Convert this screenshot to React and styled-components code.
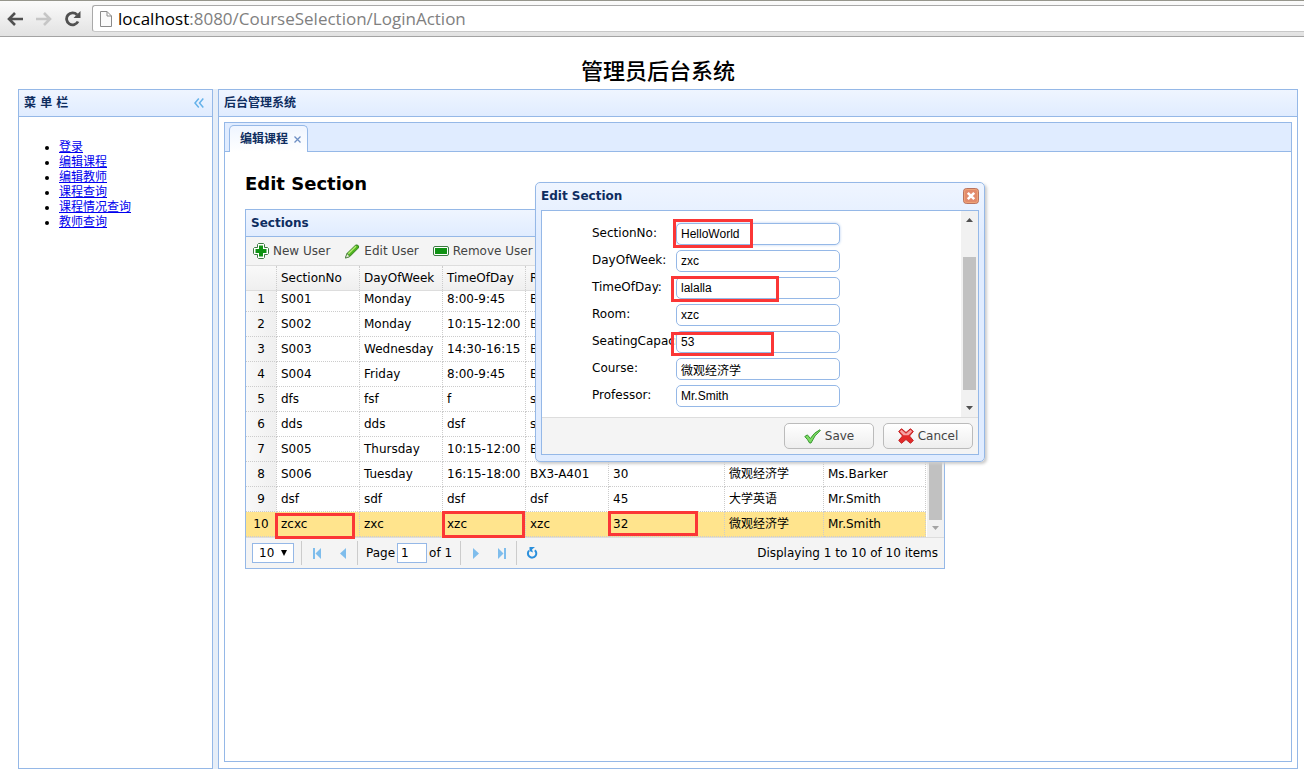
import React from 'react';
import styled, { createGlobalStyle, css } from 'styled-components';

const line = '#95B8E7';
const ui = '"DejaVu Sans", Verdana, "Noto Sans CJK SC", sans-serif';

const Global = createGlobalStyle`
  *, *::before, *::after { box-sizing: border-box; }
  body { margin: 0; background: #fff; color: #000; font: 12px/16px ${ui}; }
  button, input, select { font: inherit; color: inherit; margin: 0; }
`;

const headerFill = css`background: linear-gradient(to bottom, #EFF5FF 0, #E0ECFF 100%);`;

const Page = styled.div`
  min-height: 100vh;
  display: flex;
  flex-direction: column;
`;

/* ---------- browser bar ---------- */
const BrowserBar = styled.header`
  height: 37px;
  padding: 4px 0 4px 5px;
  display: flex;
  align-items: center;
  gap: 9px;
  background: linear-gradient(to bottom, #fbfbfb, #e2e2e2);
  border-top: 1px solid #96968c;
  border-bottom: 1px solid #a3a3a3;
`;
const NavButton = styled.button`
  width: 20px;
  height: 20px;
  padding: 0;
  border: 0;
  background: none;
  display: flex;
  align-items: center;
  justify-content: center;
  svg { display: block; }
`;
const Address = styled.div`
  flex: 1;
  height: 27px;
  display: flex;
  align-items: center;
  gap: 6px;
  padding-left: 7px;
  background: #fff;
  border: 1px solid #a9a9a9;
  border-bottom-color: #c8c8c8;
  border-right: 0;
  border-radius: 3px 0 0 3px;
  font: 17px/22px "Open Sans", "Noto Sans", sans-serif;
  color: #808080;
  white-space: nowrap;
  b { font-weight: 400; color: #000; }
`;

/* ---------- page frame ---------- */
const PageTitle = styled.h1`
  margin: 19px 0 1px 12px;
  text-align: center;
  font: 500 22px/32px "Liberation Serif", "Noto Sans CJK SC", serif;
`;
const Layout = styled.main`
  flex: 1;
  display: flex;
  gap: 5px;
  margin: 0 6px 7px 18px;
  background: #E6EEF8;
`;
const Panel = styled.section`
  display: flex;
  flex-direction: column;
  border: 1px solid ${line};
  background: #fff;
  min-width: 0;
  ${p => p.$side ? 'flex: 0 0 195px;' : 'flex: 1;'}
`;
const PanelHeader = styled.h2`
  margin: 0;
  height: 27px;
  padding: 0 8px 0 5px;
  display: flex;
  align-items: center;
  justify-content: space-between;
  border-bottom: 1px solid ${line};
  ${headerFill}
  font: 700 12px/16px ${ui};
  color: #0E2D5F;
`;
const IconButton = styled.button`
  padding: 0;
  border: 0;
  background: none;
  display: flex;
  svg { display: block; }
`;
const MenuList = styled.ul`
  margin: 23px 0 0;
  padding-left: 40px;
  line-height: 15px;
  a { color: #0000ee; }
`;

/* ---------- tabs ---------- */
const Tabs = styled.div`
  flex: 1;
  margin: 5px 5px 6px;
  border: 1px solid ${line};
  display: flex;
  flex-direction: column;
`;
const TabStrip = styled.div`
  height: 29px;
  padding: 2px 4px 0;
  display: flex;
  background: #E0ECFF;
  border-bottom: 1px solid ${line};
`;
const Tab = styled.div`
  height: 27px;
  padding: 0 6px 0 10px;
  display: flex;
  align-items: center;
  gap: 6px;
  border: 1px solid ${line};
  border-bottom: 0;
  border-radius: 5px 5px 0 0;
  background: linear-gradient(to bottom, #EFF5FF, #fff);
  font-weight: 700;
  color: #0E2D5F;
`;
const TabBody = styled.div`
  position: relative;
  flex: 1;
  padding: 20px;
`;
const Heading = styled.h2`
  margin: 0 0 14px;
  font: 700 18px/23px ${ui};
`;

/* ---------- data grid ---------- */
const Grid = styled.section`
  position: relative;
  width: 700px;
  border: 1px solid ${line};
`;
const Toolbar = styled.div`
  height: 29px;
  padding: 0 7px;
  display: flex;
  align-items: center;
  gap: 14px;
  background: #F4F4F4;
  border-bottom: 1px solid #ddd;
`;
const ToolButton = styled.button`
  padding: 0;
  border: 0;
  background: none;
  display: flex;
  align-items: center;
  gap: 4px;
  color: #444;
  white-space: nowrap;
`;
const Table = styled.table`
  width: 680px;
  flex: none;
  table-layout: fixed;
  border-collapse: separate;
  border-spacing: 0;
  th, td {
    height: 25px;
    padding: 0 4px;
    text-align: left;
    font-weight: 400;
    white-space: nowrap;
    overflow: hidden;
    border-right: 1px dotted #ccc;
    border-bottom: 1px dotted #ccc;
  }
  thead th { height: 24px; border-bottom: 0; }
  tbody th { text-align: center; padding: 0; background: linear-gradient(to right, #F9F9F9, #EFEFEF); }
`;
const Row = styled.tr`
  ${p => p.$selected && css`
    && td, && th { background: #FFE48D; }
  `}
`;
const GridHead = styled.div`
  background: linear-gradient(to bottom, #F9F9F9, #EFEFEF);
  border-bottom: 1px solid #ddd;
`;
const GridBody = styled.div`
  height: 246px;
  display: flex;
  align-items: flex-end;
  justify-content: space-between;
  overflow: hidden;
`;
const ScrollBar = styled.div`
  width: 17px;
  align-self: stretch;
  flex: none;
  display: flex;
  flex-direction: column;
  align-items: center;
  padding: 7px 0;
  background: #f1f1f1;
  svg { display: block; flex: none; }
`;
const Thumb = styled.div`
  width: 13px;
  height: ${p => p.$h}px;
  margin: auto 0 ${p => p.$end}px;
  background: #c1c1c1;
`;
const Pager = styled.div`
  height: 31px;
  padding: 0 6px;
  display: flex;
  align-items: center;
  background: #F4F4F4;
  border-top: 1px solid #ddd;
`;
const PageSize = styled.select`
  width: 42px;
  height: 20px;
  margin-right: 6px;
  padding: 0 0 0 6px;
  border: 1px solid ${line};
  border-radius: 0;
  appearance: none;
  background: #fff url("data:image/svg+xml,%3Csvg xmlns='http://www.w3.org/2000/svg' width='6' height='6'%3E%3Cpath d='M0 0h6L3 6z'/%3E%3C/svg%3E") no-repeat 28px 6px;
`;
const Divider = styled.span`
  width: 1px;
  height: 24px;
  margin: 0 2px 0 1px;
  background: #ccc;
`;
const PagerButton = styled.button`
  width: 26px;
  height: 24px;
  padding: 0;
  border: 0;
  background: none;
  display: flex;
  align-items: center;
  justify-content: center;
`;
const PageField = styled.label`
  margin: 0 7px 0 6px;
  display: flex;
  align-items: center;
  gap: 2px;
  input {
    width: 30px;
    height: 20px;
    padding: 0 3px;
    border: 1px solid ${line};
  }
`;
const Summary = styled.span`margin-left: auto;`;

/* ---------- dialog ---------- */
const Dialog = styled.div`
  position: absolute;
  left: 310px;
  top: 30px;
  width: 450px;
  padding: 0 5px 6px;
  border: 1px solid ${line};
  border-radius: 5px;
  background: linear-gradient(to bottom, #EFF5FF 0, #E0ECFF 20%);
  box-shadow: 2px 2px 3px #ccc;
`;
const DialogHeader = styled.h2`
  margin: 0;
  height: 27px;
  padding-bottom: 2px;
  display: flex;
  align-items: center;
  justify-content: space-between;
  font: 700 12px/16px ${ui};
  color: #0E2D5F;
`;
const DialogBox = styled.div`border: 1px solid ${line};`;
const DialogBody = styled.div`
  height: 206px;
  display: flex;
  justify-content: space-between;
  background: #fff;
`;
const Form = styled.form`
  padding: 12px 0 0 50px;
  display: flex;
  flex-direction: column;
  gap: 5px;
`;
const Field = styled.div`
  display: flex;
  height: 22px;
  label { width: 84px; line-height: 20px; }
  input {
    width: 164px;
    height: 22px;
    padding: 0 4px;
    border: 1px solid ${line};
    border-radius: 5px;
    background: #fff;
    position: relative;
    outline: 0;
    font: 12px/16px "Liberation Sans", "Noto Sans CJK SC", sans-serif;
    ${p => p.$focus && 'box-shadow: 0 0 3px #b5cdf0;'}
  }
`;
const DialogButtons = styled.div`
  height: 37px;
  padding: 0 5px;
  display: flex;
  align-items: center;
  justify-content: flex-end;
  gap: 9px;
  background: #F4F4F4;
  border-top: 1px solid #ddd;
`;
const Button = styled.button`
  width: 90px;
  height: 26px;
  padding: 0;
  display: flex;
  align-items: center;
  justify-content: center;
  gap: 4px;
  border: 1px solid #bbb;
  border-radius: 5px;
  background: linear-gradient(to bottom, #fff, #eee);
  color: #444;
`;
/* Highlight frames drawn over the grid and the dialog. */
const Mark = styled.span`
  position: absolute;
  left: ${p => p.$x}px;
  top: ${p => p.$y}px;
  width: ${p => p.$w}px;
  height: ${p => p.$h}px;
  border: 3px solid #fb3636;
  pointer-events: none;
`;

/* ---------- icons ---------- */
const BackIcon = ({ color }) => (
  <svg width="16" height="14" viewBox="0 0 16 14" fill="none" stroke={color} strokeWidth="2.600">
    <path d="M8 1L2 7l6 6M2 7h14" />
  </svg>
);
const ForwardIcon = ({ color }) => (
  <svg width="16" height="14" viewBox="0 0 16 14" fill="none" stroke={color} strokeWidth="2.600">
    <path d="M8 1l6 6-6 6M14 7H0" />
  </svg>
);
const ReloadIcon = () => (
  <svg width="16" height="16" viewBox="0 0 16 16">
    <path d="M13 10.500A6 6 0 1 1 12 3.800" fill="none" stroke="#505050" strokeWidth="2.800" />
    <path d="M15.500 0v7H8.500z" fill="#505050" />
  </svg>
);
const FileIcon = () => (
  <svg width="12" height="16" viewBox="0 0 12 16" fill="#fafafa" stroke="#8a8a8a">
    <path d="M.5.5h6.500l4.500 4.500v10.500H.5zM7 .5V5h4.500" />
  </svg>
);
const CollapseIcon = () => (
  <svg width="10" height="10" viewBox="0 0 10 10" fill="none" stroke="#65b2ea" strokeWidth="1.500">
    <path d="M4.800.5L1 5l3.800 4.500M9.300.5L5.500 5l3.800 4.500" />
  </svg>
);
const TabCloseIcon = () => (
  <svg width="7" height="7" viewBox="0 0 7 7" stroke="#6d8fc4" strokeWidth="1.300">
    <path d="M.5.5l6 6M6.500.5l-6 6" />
  </svg>
);
const AddIcon = () => (
  <svg width="16" height="16" viewBox="0 0 16 16">
    <path d="M5.500.5h5l1 1v3h3l1 1v5l-1 1h-3v3l-1 1h-5l-1-1v-3h-3l-1-1v-5l1-1h3v-3z" fill="#fff" stroke="#3c7a42" />
    <path d="M6 2.500h4V6h3.500v4H10v3.500H6V10H2.500V6H6z" fill="#0f9213" />
  </svg>
);
const EditIcon = () => (
  <svg width="16" height="15" viewBox="0 0 16 15">
    <path d="M1.500 14l1.500-4.500L11.300 1.400q1.800-1 2.900.2 1 1.200-.2 2.700L5.800 12.500z" fill="#4fb51f" stroke="#2f7d1c" />
    <path d="M4.300 9.800L12 2.200" stroke="#b4ec72" strokeWidth="1.400" />
    <path d="M1.500 14l1.500-4.500 2.800 3z" fill="#e9f2dc" stroke="#3f6b33" strokeWidth=".6" />
  </svg>
);
const RemoveIcon = () => (
  <svg width="16" height="10" viewBox="0 0 16 10">
    <rect x=".5" y=".5" width="15" height="9" rx="1.500" fill="#fff" stroke="#3c7a42" />
    <rect x="2" y="2" width="12" height="6" fill="#0f9213" />
  </svg>
);
const Arrow = ({ up, color = '#505050' }) => (
  <svg width="7" height="4" viewBox="0 0 7 4" fill={color}>
    <path d={up ? 'M0 4l3.500-4L7 4z' : 'M0 0l3.500 4L7 0z'} />
  </svg>
);
const PageIcon = ({ back, bar }) => (
  <svg width="10" height="11" viewBox="0 0 10 11" fill="#7fbdec">
    <g transform={back ? undefined : 'translate(10 0) scale(-1 1)'}>
      {bar && <path d="M1 0h2v11H1z" />}
      <path d={bar ? 'M9 0v11L3.500 5.500z' : 'M8 0v11L2 5.500z'} />
    </g>
  </svg>
);
const RefreshIcon = () => (
  <svg width="12" height="12" viewBox="0 0 12 12">
    <path d="M8.800 3.200A4.200 4.200 0 1 1 3 3.600" fill="none" stroke="#2a8fdc" strokeWidth="2" />
    <path d="M3.500 0H9L6 2.500 7 5.500 3.500 4z" fill="#2a8fdc" />
  </svg>
);
const CloseIcon = () => (
  <svg width="16" height="16" viewBox="0 0 16 16">
    <rect x=".5" y=".5" width="15" height="15" rx="3" fill="#e28b6c" stroke="#b9735f" />
    <rect x="1.500" y="1.500" width="13" height="13" rx="2" fill="none" stroke="#efa477" />
    <path d="M4.800 4.800l6.400 6.400M11.200 4.800l-6.400 6.400" stroke="#fff" strokeWidth="2.600" />
  </svg>
);
const SaveIcon = () => (
  <svg width="17" height="15" viewBox="0 0 17 15">
    <path d="M.8 7.500l2.600-1.600 3 3.600Q10 3.500 15.800.8L16.300 1.500Q10.500 6 7 14H5.600Q3.800 10.500.8 7.500z" fill="#7ddc63" stroke="#36962f" />
  </svg>
);
const CancelIcon = () => (
  <svg width="16" height="16" viewBox="0 0 16 16">
    <path d="M3.500.7L8 4.500 12.500.7l2.800 2.800L11.500 8l3.800 4.500-2.800 2.800L8 11.500l-4.500 3.800L.7 12.500 4.500 8 .7 3.500z" fill="#e32a2a" stroke="#c02424" strokeLinejoin="round" />
    <path d="M3.500 1.800L8 5.800l4.500-4 1.700 1.700-3.700 3.700h-5L1.800 3.500z" fill="#f5a3a3" />
  </svg>
);

const menu = ['登录', '编辑课程', '编辑教师', '课程查询', '课程情况查询', '教师查询'];
const columns = ['SectionNo', 'DayOfWeek', 'TimeOfDay', 'Room', 'SeatingCapacity', 'Course', 'Professor'];
const widths = [31, 83, 83, 83, 83, 116, 99, 102];
const rows = [
  ['S001', 'Monday', '8:00-9:45', 'BX3-A401'],
  ['S002', 'Monday', '10:15-12:00', 'BX3-A401'],
  ['S003', 'Wednesday', '14:30-16:15', 'BX3-A401'],
  ['S004', 'Friday', '8:00-9:45', 'BX3-A401'],
  ['dfs', 'fsf', 'f', 'sdf'],
  ['dds', 'dds', 'dsf', 'sdf'],
  ['S005', 'Thursday', '10:15-12:00', 'BX3-A401'],
  ['S006', 'Tuesday', '16:15-18:00', 'BX3-A401', '30', '微观经济学', 'Ms.Barker'],
  ['dsf', 'sdf', 'dsf', 'dsf', '45', '大学英语', 'Mr.Smith'],
  ['zcxc', 'zxc', 'xzc', 'xzc', '32', '微观经济学', 'Mr.Smith'],
];
const fields = [
  ['SectionNo', 'HelloWorld'],
  ['DayOfWeek', 'zxc'],
  ['TimeOfDay', 'lalalla'],
  ['Room', 'xzc'],
  ['SeatingCapacity', '53'],
  ['Course', '微观经济学'],
  ['Professor', 'Mr.Smith'],
];

const Cols = () => <colgroup>{widths.map((w, i) => <col key={i} width={w} />)}</colgroup>;

function SectionGrid() {
  return (
    <Grid>
      <PanelHeader>Sections</PanelHeader>
      <Toolbar>
        <ToolButton><AddIcon />New User</ToolButton>
        <ToolButton><EditIcon />Edit User</ToolButton>
        <ToolButton><RemoveIcon />Remove User</ToolButton>
      </Toolbar>
      <GridHead>
        <Table>
          <Cols />
          <thead>
            <tr>
              <th />
              {columns.map((c, i) => <th key={c} scope="col" aria-label={c}>{i < 4 && c}</th>)}
            </tr>
          </thead>
        </Table>
      </GridHead>
      <GridBody>
        <Table>
          <Cols />
          <tbody>
            {rows.map((r, i) => (
              <Row key={i} $selected={i === 9}>
                <th scope="row">{i + 1}</th>
                {columns.map((c, j) => <td key={c}>{r[j]}</td>)}
              </Row>
            ))}
          </tbody>
        </Table>
        <ScrollBar>
          <Arrow up color="#a3a3a3" />
          <Thumb $h={212} $end={6} />
          <Arrow color="#a3a3a3" />
        </ScrollBar>
      </GridBody>
      <Pager>
        <PageSize aria-label="Page size" defaultValue="10"><option>10</option></PageSize>
        <Divider />
        <PagerButton aria-label="First"><PageIcon back bar /></PagerButton>
        <PagerButton aria-label="Previous"><PageIcon back /></PagerButton>
        <Divider />
        <PageField>Page<input defaultValue="1" />of 1</PageField>
        <Divider />
        <PagerButton aria-label="Next"><PageIcon /></PagerButton>
        <PagerButton aria-label="Last"><PageIcon bar /></PagerButton>
        <Divider />
        <PagerButton aria-label="Refresh"><RefreshIcon /></PagerButton>
        <Summary>Displaying 1 to 10 of 10 items</Summary>
      </Pager>
      <Mark $x={29} $y={303} $w={80} $h={26} />
      <Mark $x={196} $y={301} $w={83} $h={27} />
      <Mark $x={362} $y={301} $w={90} $h={25} />
    </Grid>
  );
}

function EditDialog() {
  return (
    <Dialog role="dialog" aria-labelledby="dialog-title">
      <DialogHeader>
        <span id="dialog-title">Edit Section</span>
        <IconButton aria-label="Close"><CloseIcon /></IconButton>
      </DialogHeader>
      <DialogBox>
        <DialogBody>
          <Form>
            {fields.map(([name, value], i) => (
              <Field key={name} $focus={i === 0}>
                <label htmlFor={name}>{name}:</label>
                <input id={name} defaultValue={value} />
              </Field>
            ))}
          </Form>
          <ScrollBar>
            <Arrow up />
            <Thumb $h={133} $end={16} />
            <Arrow />
          </ScrollBar>
        </DialogBody>
        <DialogButtons>
          <Button><SaveIcon />Save</Button>
          <Button><CancelIcon />Cancel</Button>
        </DialogButtons>
      </DialogBox>
      <Mark $x={137} $y={36} $w={80} $h={29} />
      <Mark $x={135} $y={93} $w={108} $h={26} />
      <Mark $x={135} $y={149} $w={103} $h={24} />
    </Dialog>
  );
}

export default function App() {
  return (
    <Page>
      <Global />
      <BrowserBar>
        <NavButton aria-label="Back"><BackIcon color="#505050" /></NavButton>
        <NavButton aria-label="Forward"><ForwardIcon color="#c6c6c6" /></NavButton>
        <NavButton aria-label="Reload"><ReloadIcon /></NavButton>
        <Address><FileIcon /><span><b>localhost</b>:8080/CourseSelection/LoginAction</span></Address>
      </BrowserBar>
      <PageTitle>管理员后台系统</PageTitle>
      <Layout>
        <Panel $side>
          <PanelHeader>菜 单 栏<IconButton aria-label="Collapse"><CollapseIcon /></IconButton></PanelHeader>
          <MenuList>{menu.map(m => <li key={m}><a href="#">{m}</a></li>)}</MenuList>
        </Panel>
        <Panel>
          <PanelHeader>后台管理系统</PanelHeader>
          <Tabs>
            <TabStrip>
              <Tab>编辑课程<IconButton aria-label="Close tab"><TabCloseIcon /></IconButton></Tab>
            </TabStrip>
            <TabBody>
              <Heading>Edit Section</Heading>
              <SectionGrid />
              <EditDialog />
            </TabBody>
          </Tabs>
        </Panel>
      </Layout>
    </Page>
  );
}
